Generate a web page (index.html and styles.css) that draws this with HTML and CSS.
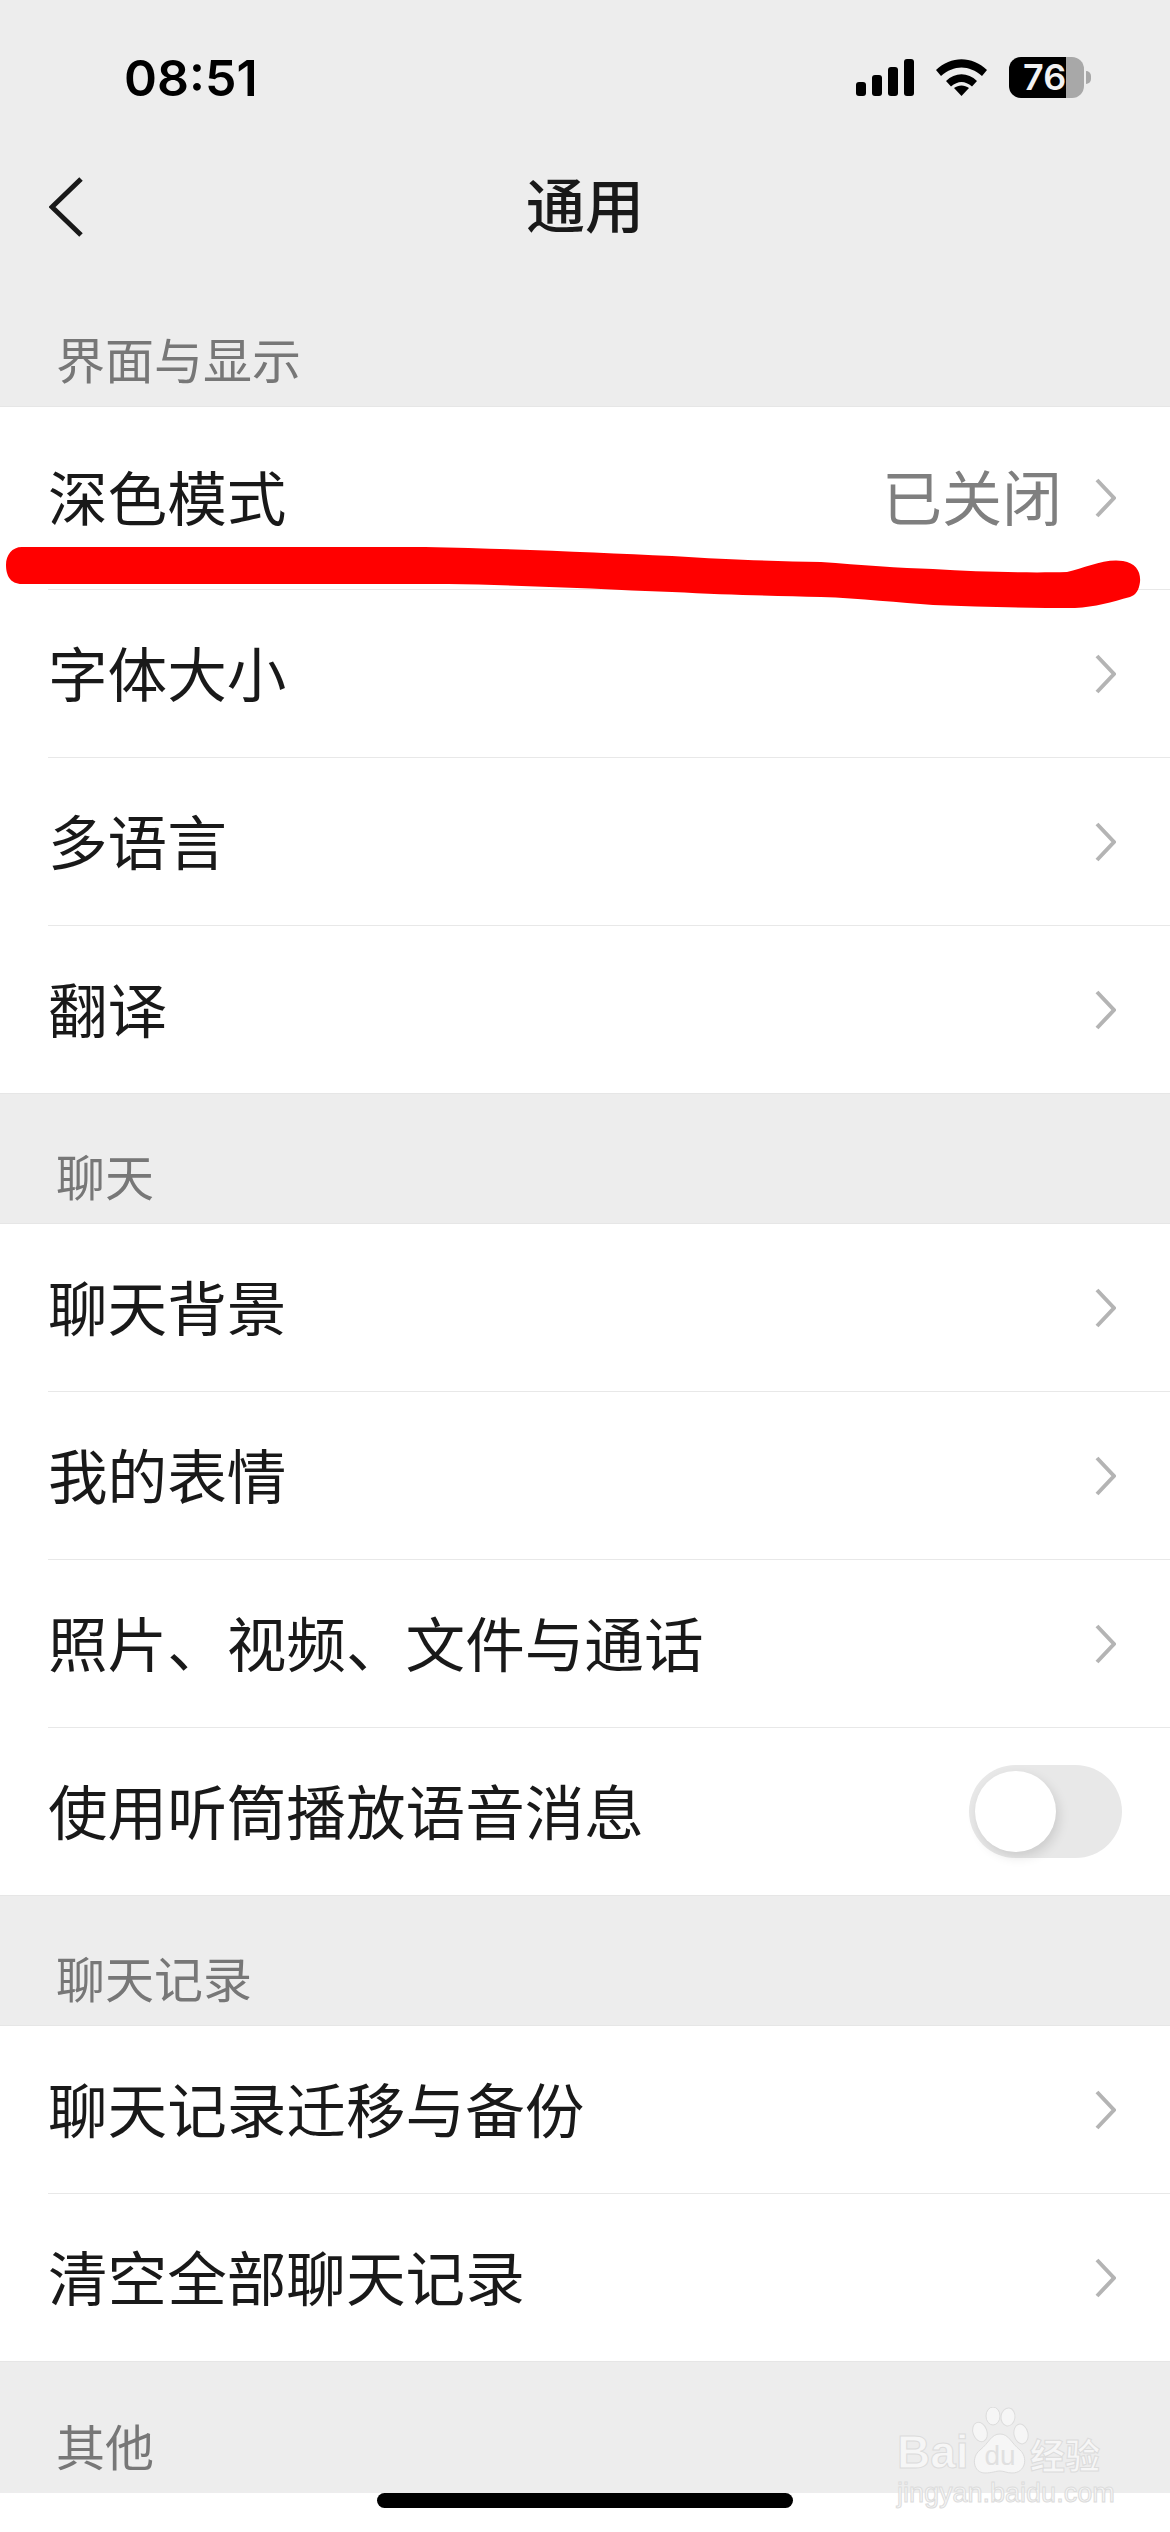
FILE: index.html
```html
<!DOCTYPE html>
<html lang="zh-CN">
<head>
    <meta charset="UTF-8">
    <meta name="viewport" content="width=device-width, initial-scale=1.0">
    <title>通用</title>
    <link rel="stylesheet" href="styles.css">
</head>
<body>
    <div class="phone">
        <!-- Barra de estado -->
        <div class="status-bar">
            <span class="time">08:51</span>
            <div class="status-icons">
                <svg class="signal" width="58" height="37" viewBox="0 0 58 37">
                    <rect x="0" y="23" width="10" height="14" rx="3"/>
                    <rect x="16" y="16" width="10" height="21" rx="3"/>
                    <rect x="32" y="8" width="10" height="29" rx="3"/>
                    <rect x="48" y="0" width="10" height="37" rx="3"/>
                </svg>
                <svg class="wifi" width="51" height="37" viewBox="0 0 51 37">
                    <path d="M0 11 C15 -3.5 36 -3.500 51 11 L46 17 C33 5.500 18 5.500 5 17 Z"/>
                    <path d="M10 22 C19 13 32 13 41 22 L36 27.500 C29 21.500 22 21.500 15 27.500 Z"/>
                    <path d="M18 29 C22.500 25.500 28.500 25.500 33 29 L25.500 37 Z"/>
                </svg>
                <div class="battery">
                    <div class="battery-body">
                        <span class="battery-text">76</span>
                    </div>
                    <div class="battery-nub"></div>
                </div>
            </div>
        </div>

        <!-- Navegacion -->
        <div class="nav-bar">
            <svg class="back" width="34" height="60" viewBox="0 0 34 60">
                <path d="M32 2 L3 30 L32 58"/>
            </svg>
            <h1>通用</h1>
        </div>

        <div class="section-title section-first">界面与显示</div>
        <div class="group">
            <div class="row row-first">
                <span class="row-label">深色模式</span>
                <span class="row-value">已关闭</span>
                <svg class="chevron" width="22" height="40" viewBox="0 0 22 40"><path d="M3 2 L20 20 L3 38"/></svg>
            </div>
            <div class="row">
                <span class="row-label">字体大小</span>
                <svg class="chevron" width="22" height="40" viewBox="0 0 22 40"><path d="M3 2 L20 20 L3 38"/></svg>
            </div>
            <div class="row">
                <span class="row-label">多语言</span>
                <svg class="chevron" width="22" height="40" viewBox="0 0 22 40"><path d="M3 2 L20 20 L3 38"/></svg>
            </div>
            <div class="row row-last">
                <span class="row-label">翻译</span>
                <svg class="chevron" width="22" height="40" viewBox="0 0 22 40"><path d="M3 2 L20 20 L3 38"/></svg>
            </div>
        </div>

        <div class="section-title">聊天</div>
        <div class="group">
            <div class="row">
                <span class="row-label">聊天背景</span>
                <svg class="chevron" width="22" height="40" viewBox="0 0 22 40"><path d="M3 2 L20 20 L3 38"/></svg>
            </div>
            <div class="row">
                <span class="row-label">我的表情</span>
                <svg class="chevron" width="22" height="40" viewBox="0 0 22 40"><path d="M3 2 L20 20 L3 38"/></svg>
            </div>
            <div class="row">
                <span class="row-label">照片、视频、文件与通话</span>
                <svg class="chevron" width="22" height="40" viewBox="0 0 22 40"><path d="M3 2 L20 20 L3 38"/></svg>
            </div>
            <div class="row row-last">
                <span class="row-label">使用听筒播放语音消息</span>
                <div class="switch"><div class="switch-knob"></div></div>
            </div>
        </div>

        <div class="section-title">聊天记录</div>
        <div class="group">
            <div class="row">
                <span class="row-label">聊天记录迁移与备份</span>
                <svg class="chevron" width="22" height="40" viewBox="0 0 22 40"><path d="M3 2 L20 20 L3 38"/></svg>
            </div>
            <div class="row row-last">
                <span class="row-label">清空全部聊天记录</span>
                <svg class="chevron" width="22" height="40" viewBox="0 0 22 40"><path d="M3 2 L20 20 L3 38"/></svg>
            </div>
        </div>

        <div class="section-title section-end">其他</div>

        <!-- Trazo rojo encima de la primera fila -->
        <svg class="red-mark" width="1170" height="100" viewBox="0 540 1170 100">
            <path d="M22 547 L425 547 C520 549 600 553 672 556 C730 560 780 561 821 562 C860 565 900 568 933 569 C980 572 1030 573 1067 572 C1085 568 1105 558 1123 561 C1136 563 1141 572 1140 582 C1139 590 1136 595 1130 597 C1112 602 1095 607 1075 608 C1030 608 980 607 933 605 C900 603 860 598 821 597 C780 596 730 595 672 592 C600 589 520 585 448 584 L22 584 C10 584 6 575 6 565 C6 555 12 547 22 547 Z"/>
        </svg>

        <!-- Marca de agua -->
        <div class="watermark">
            <div class="wm-top">
                <span class="wm-bai">Bai</span>
                <svg class="wm-paw" width="60" height="67" viewBox="0 0 60 67">
                    <ellipse cx="10" cy="25" rx="7" ry="10" transform="rotate(-20 10 25)"/>
                    <ellipse cx="23" cy="9" rx="7" ry="9"/>
                    <ellipse cx="38" cy="10" rx="7" ry="9" transform="rotate(8 38 10)"/>
                    <ellipse cx="51" cy="27" rx="7" ry="10" transform="rotate(-12 51 27)"/>
                    <path d="M30 27 C39 27 41 36 50 43 C58 50 56 66 42 66 C37 66 34 64 30 64 C26 64 22 66 15 66 C3 66 1 50 10 43 C19 36 21 27 30 27 Z"/>
                    <text x="30" y="58" class="wm-du">du</text>
                </svg>
                <span class="wm-cn">经验</span>
            </div>
            <div class="wm-url">jingyan.baidu.com</div>
        </div>

        <div class="home-bar"></div>
    </div>
</body>
</html>
```
FILE: styles.css
```css
* {
    box-sizing: border-box;
}
html, body {
    margin: 0;
    padding: 0;
}
body {
    font-family: "Noto Sans CJK SC", "Noto Sans", sans-serif;
    background-color: #ffffff;
}
.phone {
    position: relative;
    width: 1170px;
    height: 2532px;
    overflow: hidden;
    background-color: #ffffff;
}

/* Barra de estado */
.status-bar {
    height: 140px;
    background-color: #ededed;
    padding: 0 79px 0 124px;
    display: flex;
    justify-content: space-between;
    align-items: flex-start;
}
.time {
    font-family: Inter, "Liberation Sans", sans-serif;
    font-size: 50px;
    font-weight: 600;
    line-height: 50px;
    margin-top: 53px;
    color: #000;
}
.status-icons {
    display: flex;
    align-items: flex-start;
    margin-top: 57px;
}
.signal {
    margin-top: 2px;
    margin-right: 22px;
}
.signal rect, .wifi path {
    fill: #000;
}
.wifi {
    margin-top: 2px;
    margin-right: 22px;
}
.battery {
    display: flex;
    align-items: center;
}
.battery-body {
    width: 75px;
    height: 41px;
    border-radius: 12px;
    background: linear-gradient(to right, #000 76%, #a8a8a8 76%);
    display: flex;
    align-items: center;
    padding-left: 14px;
}
.battery-text {
    font-family: Inter, "Liberation Sans", sans-serif;
    font-size: 36px;
    font-weight: 600;
    line-height: 41px;
    color: #f2f2f2;
}
.battery-nub {
    width: 5px;
    height: 13px;
    margin-left: 2px;
    border-radius: 0 6px 6px 0;
    background-color: #a8a8a8;
}

/* Navegacion */
.nav-bar {
    height: 134px;
    background-color: #ededed;
    display: flex;
    align-items: center;
    justify-content: center;
    position: relative;
}
.nav-bar h1 {
    margin: 0 0 8px;
    font-size: 59px;
    font-weight: 500;
    line-height: 80px;
    color: #191919;
}
.back {
    position: absolute;
    left: 49px;
    top: 37px;
}
.back path {
    fill: none;
    stroke: #191919;
    stroke-width: 5;
}

/* Secciones */
.section-title {
    height: 129px;
    padding: 0 0 4px 56px;
    background-color: #ededed;
    display: flex;
    align-items: flex-end;
    font-size: 49px;
    line-height: 88px;
    color: #777777;
}
.section-first {
    height: 132px;
}
.section-end {
    height: 131px;
}
.group {
    background-color: #ffffff;
    border-top: 1px solid #e6e6e6;
}
.row {
    height: 168px;
    margin-left: 48px;
    padding-right: 48px;
    display: flex;
    align-items: center;
    border-bottom: 1px solid #e8e8e8;
}
.row-first {
    height: 183px;
}
/* el ultimo separador llega hasta el borde izquierdo */
.row-last {
    margin-left: 0;
    padding-left: 48px;
    border-bottom-color: #e6e6e6;
}
.row-label {
    flex: 1;
    font-size: 59.6px;
    line-height: 80px;
    margin-bottom: 6px;
    color: #191919;
}
.row-value {
    font-size: 60px;
    line-height: 80px;
    margin-bottom: 6px;
    color: #7f7f7f;
    margin-right: 32px;
}
.chevron {
    margin-right: 6px;
}
.chevron path {
    fill: none;
    stroke: #b4b4b4;
    stroke-width: 4;
}

/* Interruptor */
.switch {
    width: 153px;
    height: 93px;
    border-radius: 47px;
    background-color: #e8e8e8;
    padding: 6px;
}
.switch-knob {
    width: 81px;
    height: 81px;
    border-radius: 50%;
    background-color: #ffffff;
    box-shadow: 3px 5px 12px rgba(0, 0, 0, 0.12);
}

/* Elementos superpuestos */
.red-mark {
    position: absolute;
    left: 0;
    top: 540px;
}
.red-mark path {
    fill: #ff0000;
}
.home-bar {
    position: absolute;
    left: 377px;
    top: 2493px;
    width: 416px;
    height: 15px;
    border-radius: 8px;
    background-color: #000;
}
.watermark {
    position: absolute;
    left: 897px;
    top: 2407px;
    width: 210px;
    color: #f6f6f6;
}
.wm-top {
    display: flex;
    align-items: flex-end;
    height: 67px;
}
.wm-bai {
    font-family: "Liberation Sans", sans-serif;
    font-size: 46px;
    font-weight: 700;
    line-height: 44px;
    width: 73px;
    -webkit-text-stroke: 1px #dcdcdc;
}
.wm-paw ellipse, .wm-paw path {
    fill: #f6f6f6;
    stroke: #dcdcdc;
    stroke-width: 1;
}
.wm-du {
    font-family: "Liberation Sans", sans-serif;
    font-size: 28px;
    text-anchor: middle;
    fill: #e0e0e0;
}
.wm-cn {
    font-size: 35px;
    font-weight: 700;
    line-height: 40px;
    white-space: nowrap;
    -webkit-text-stroke: 1px #dcdcdc;
}
.wm-url {
    font-family: "Liberation Sans", sans-serif;
    font-size: 27px;
    line-height: 30px;
    margin-top: 4px;
    white-space: nowrap;
    color: #f6f6f6;
    -webkit-text-stroke: 1px #dcdcdc;
}
```
